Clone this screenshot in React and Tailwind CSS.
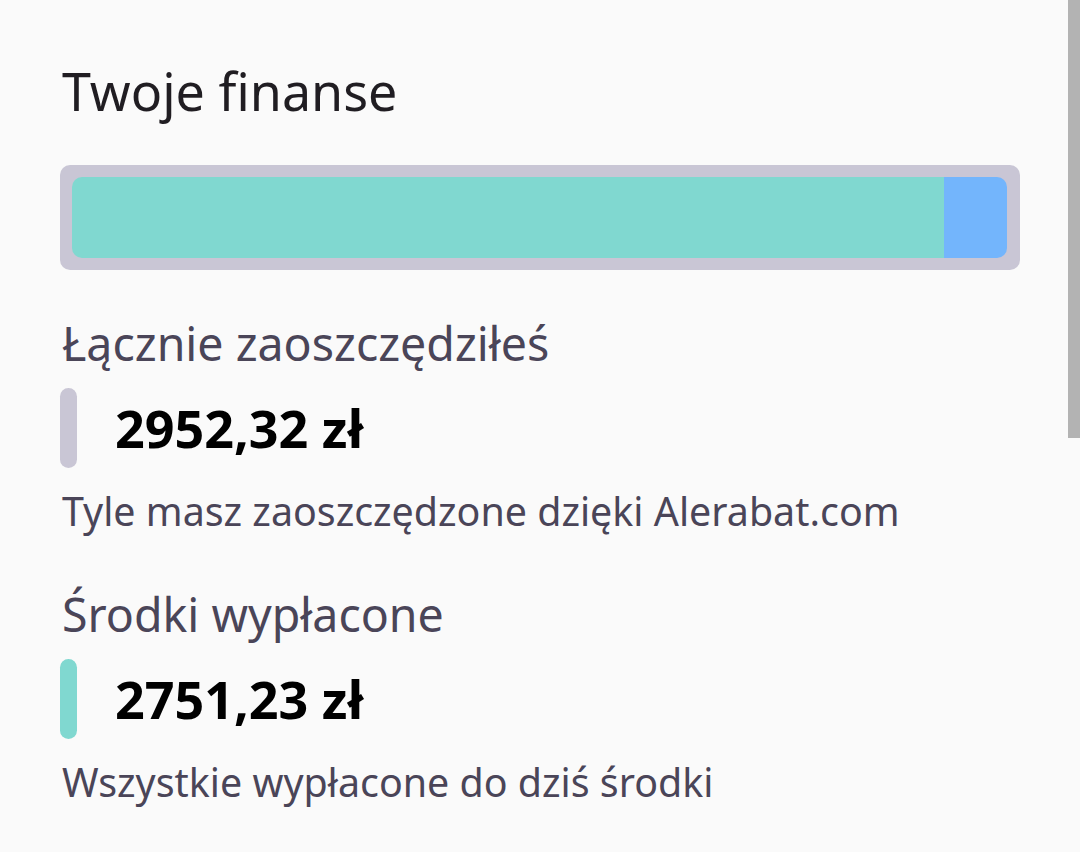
export default function App() {
  const font = { fontFamily: '"Noto Sans", "Open Sans", sans-serif' };
  return (
    <div className="relative w-[1080px] h-[852px] bg-[#fafafa] overflow-hidden" style={font}>
      <div className="absolute right-0 top-0 w-[12px] h-[438px] bg-[#b3b3b3]" />
      <div className="flex flex-col pl-[60px] pr-[60px] pt-[57px]">
        <h1 className="text-[52px] leading-[68px] text-[#201d22] pl-[2px]">Twoje finanse</h1>
        <div className="mt-[40px] h-[105px] rounded-[10px] bg-[#c9c6d5] pt-[12px] pb-[12px] pl-[12px] pr-[13px] flex">
          <div className="flex flex-1 rounded-[10px] overflow-hidden">
            <div className="bg-[#80d8d0] w-[872px]" />
            <div className="bg-[#73b5fc] flex-1" />
          </div>
        </div>
        <div className="mt-[43px] text-[46.5px] leading-[60px] text-[#4a4558] pl-[2px]">Łącznie zaoszczędziłeś</div>
        <div className="mt-[15px] flex items-center">
          <div className="w-[17px] h-[80px] rounded-full bg-[#c9c6d5]" />
          <div className="ml-[38px] text-[52px] font-bold text-black leading-[64px]">2952,32 zł</div>
        </div>
        <div className="mt-[18px] text-[39.4px] leading-[50px] text-[#4a4558] pl-[2px]">Tyle masz zaoszczędzone dzięki Alerabat.com</div>
        <div className="mt-[48px] text-[46.5px] leading-[60px] text-[#4a4558] pl-[2px]">Środki wypłacone</div>
        <div className="mt-[15px] flex items-center">
          <div className="w-[17px] h-[80px] rounded-full bg-[#80d8d0]" />
          <div className="ml-[38px] text-[52px] font-bold text-black leading-[64px]">2751,23 zł</div>
        </div>
        <div className="mt-[18px] text-[39.4px] leading-[50px] text-[#4a4558] pl-[2px]">Wszystkie wypłacone do dziś środki</div>
      </div>
    </div>
  );
}
